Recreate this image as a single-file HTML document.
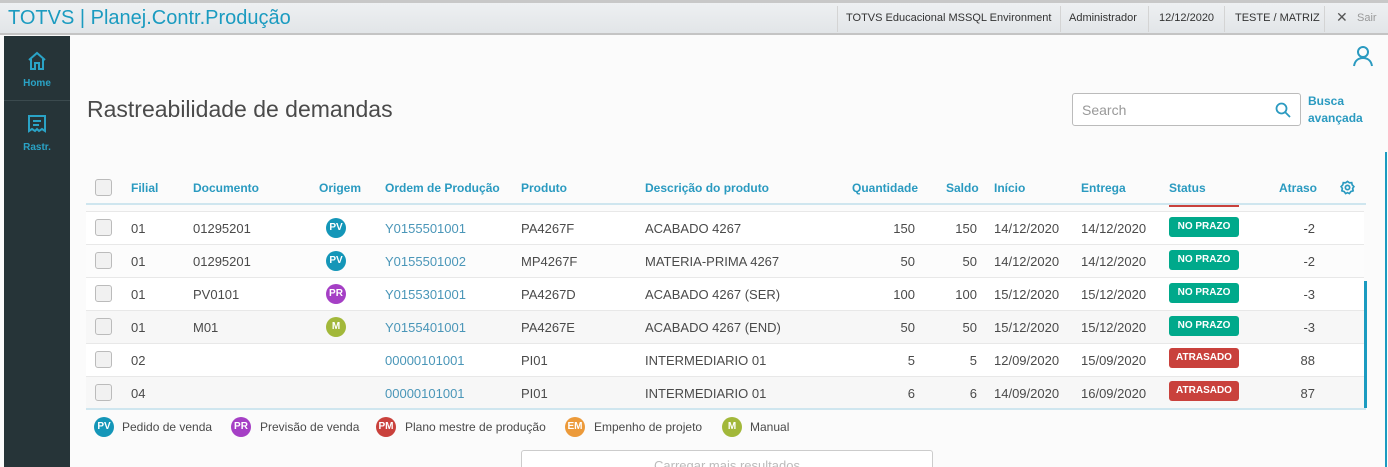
<!DOCTYPE html>
<html><head><meta charset="utf-8"><style>
*{margin:0;padding:0;box-sizing:border-box}
html{width:1388px;height:467px;overflow:hidden}
body{width:1388px;height:467px;overflow:hidden;background:#fbfbfb;font-family:"Liberation Sans",sans-serif;position:relative;color:#4a4a4a}
.top{position:absolute;left:0;top:0;width:1388px;height:35px;background:linear-gradient(#eef0f2,#e2e5e8);border-top:3px solid #c8c8c8;border-bottom:2px solid #c4c4c4}
.title{position:absolute;left:8px;top:4px;font-size:20px;color:#1b9bc0}
.tb{position:absolute;top:9px;font-size:11px;color:#333;white-space:nowrap}
.sep{position:absolute;top:3px;width:1px;height:26px;background:#d4d4d4}
.side{position:absolute;left:4px;top:36px;width:66px;height:431px;background:#263438}
.side .lbl{position:absolute;width:66px;text-align:center;font-size:10px;font-weight:bold;color:#2aa3c6}
.a{position:absolute;font-size:13px;white-space:nowrap}
.h{position:absolute;font-size:12px;color:#2a9ac0;font-weight:bold;top:181px;white-space:nowrap}
.row{position:absolute;left:86px;width:1278px;height:33px;border-top:1px solid #e8e8e8}
.cb{position:absolute;left:95px;width:17px;height:17px;border:1px solid #bbb;border-radius:3px;background:#f1f1f1}
.badge{position:absolute;left:1169px;width:70px;height:20px;border-radius:3px;color:#fff;font-size:10px;font-weight:bold;text-align:center;line-height:20px}
.dot{position:absolute;width:20px;height:20px;border-radius:50%;color:#fff;font-size:10px;font-weight:bold;text-align:center;line-height:20px}
.lnk{color:#4a96b8}
</style></head><body>
<div class="top">
<div class="title">TOTVS | Planej.Contr.Produção</div>
<div class="sep" style="left:837px"></div>
<div class="tb" style="left:846px">TOTVS Educacional MSSQL Environment</div>
<div class="sep" style="left:1060px"></div>
<div class="tb" style="left:1069px">Administrador</div>
<div class="sep" style="left:1148px"></div>
<div class="tb" style="left:1159px">12/12/2020</div>
<div class="sep" style="left:1224px"></div>
<div class="tb" style="left:1235px">TESTE / MATRIZ</div>
<div class="sep" style="left:1324px"></div>
<div class="tb" style="left:1336px;font-size:14px;top:6px;color:#555">✕</div>
<div class="tb" style="left:1357px;color:#999">Sair</div>
</div>

<div class="side">
<svg style="position:absolute;left:23px;top:15px" width="20" height="20" viewBox="0 0 20 20" fill="none" stroke="#2aa3c6" stroke-width="2"><path d="M2 9L10 2L18 9M4 8V18H8V12H12V18H16V8"/></svg>
<div class="lbl" style="top:42px">Home</div>
<div style="position:absolute;left:0;top:64px;width:66px;height:1px;background:#3b4a4e"></div>
<svg style="position:absolute;left:23px;top:78px" width="20" height="20" viewBox="0 0 20 20" fill="none" stroke="#2aa3c6" stroke-width="2"><path d="M2 2H18V17L15 15L12 17L10 15L8 17L5 15L2 17Z"/><path d="M6 7H14M6 11H12"/></svg>
<div class="lbl" style="top:106px">Rastr.</div>
</div>

<svg style="position:absolute;left:1352px;top:45px" width="22" height="22" viewBox="0 0 22 22" fill="none" stroke="#2a9ac0" stroke-width="2"><circle cx="11" cy="7" r="5"/><path d="M2 21C3 15 7 13 11 13C15 13 19 15 20 21"/></svg>

<div class="a" style="left:87px;top:96px;font-size:23px;color:#4a4a4a">Rastreabilidade de demandas</div>

<div style="position:absolute;left:1072px;top:93px;width:229px;height:33px;border:1px solid #bbb;border-radius:3px;background:#fff"></div>
<div class="a" style="left:1082px;top:102px;font-size:14px;color:#999">Search</div>
<svg style="position:absolute;left:1275px;top:102px" width="16" height="16" viewBox="0 0 16 16" fill="none" stroke="#2a9ac0" stroke-width="1.8"><circle cx="6.5" cy="6.5" r="5"/><path d="M10 10L15 15"/></svg>
<div class="a" style="left:1308px;top:93px;font-size:12px;font-weight:bold;color:#2a9ac0;line-height:17px">Busca<br>avançada</div>

<div style="position:absolute;left:1385px;top:152px;width:2px;height:315px;background:#1b9bc0"></div>

<div class="cb" style="top:179px"></div>
<div class="h" style="left:131px">Filial</div>
<div class="h" style="left:193px">Documento</div>
<div class="h" style="left:319px">Origem</div>
<div class="h" style="left:385px">Ordem de Produção</div>
<div class="h" style="left:521px">Produto</div>
<div class="h" style="left:645px">Descrição do produto</div>
<div class="h" style="left:852px">Quantidade</div>
<div class="h" style="left:946px">Saldo</div>
<div class="h" style="left:994px">Início</div>
<div class="h" style="left:1081px">Entrega</div>
<div class="h" style="left:1169px">Status</div>
<div class="h" style="left:1279px">Atraso</div>
<svg style="position:absolute;left:1340px;top:180px" width="15" height="15" viewBox="0 0 16 16" fill="none" stroke="#2a9ac0" stroke-width="1.8"><path d="M8 1.5L10 3L12.5 2.8L13 5.2L14.8 7L13.5 9L14 11.5L11.5 12.3L10 14.5L8 13.5L6 14.5L4.5 12.3L2 11.5L2.5 9L1.2 7L3 5.2L3.5 2.8L6 3Z"/><circle cx="8" cy="8" r="2.3"/></svg>
<div style="position:absolute;left:86px;top:203px;width:1280px;height:2px;background:#cfe6ef"></div>
<div style="position:absolute;left:1169px;top:205px;width:70px;height:2px;background:#c9413c"></div>

<div class="row" style="top:211px;background:#fff"></div>
<div class="row" style="top:244px;background:#fcfcfc"></div>
<div class="row" style="top:277px;background:#fff"></div>
<div class="row" style="top:310px;background:#f7f7f7"></div>
<div class="row" style="top:343px;background:#fff"></div>
<div class="row" style="top:376px;background:#f7f7f7"></div>
<div style="position:absolute;left:86px;top:408px;width:1280px;height:2px;background:#cfe6ef"></div>
<div style="position:absolute;left:1364px;top:281px;width:3px;height:127px;background:#1b9bc0"></div>

<div class="cb" style="top:219px"></div><div class="a" style="left:131px;top:221px">01</div><div class="a" style="left:193px;top:221px">01295201</div><div class="dot" style="left:326px;top:218px;background:#1496b8">PV</div><div class="a lnk" style="left:385px;top:221px">Y0155501001</div><div class="a" style="left:521px;top:221px">PA4267F</div><div class="a" style="left:645px;top:221px">ACABADO 4267</div><div class="a" style="right:473px;top:221px">150</div><div class="a" style="right:411px;top:221px">150</div><div class="a" style="left:994px;top:221px">14/12/2020</div><div class="a" style="left:1081px;top:221px">14/12/2020</div><div class="badge" style="top:217px;background:#00a98b">NO PRAZO</div><div class="a" style="right:73px;top:221px">-2</div>

<div class="cb" style="top:252px"></div><div class="a" style="left:131px;top:254px">01</div><div class="a" style="left:193px;top:254px">01295201</div><div class="dot" style="left:326px;top:251px;background:#1496b8">PV</div><div class="a lnk" style="left:385px;top:254px">Y0155501002</div><div class="a" style="left:521px;top:254px">MP4267F</div><div class="a" style="left:645px;top:254px">MATERIA-PRIMA 4267</div><div class="a" style="right:473px;top:254px">50</div><div class="a" style="right:411px;top:254px">50</div><div class="a" style="left:994px;top:254px">14/12/2020</div><div class="a" style="left:1081px;top:254px">14/12/2020</div><div class="badge" style="top:250px;background:#00a98b">NO PRAZO</div><div class="a" style="right:73px;top:254px">-2</div>

<div class="cb" style="top:285px"></div><div class="a" style="left:131px;top:287px">01</div><div class="a" style="left:193px;top:287px">PV0101</div><div class="dot" style="left:326px;top:284px;background:#a53fc5">PR</div><div class="a lnk" style="left:385px;top:287px">Y0155301001</div><div class="a" style="left:521px;top:287px">PA4267D</div><div class="a" style="left:645px;top:287px">ACABADO 4267 (SER)</div><div class="a" style="right:473px;top:287px">100</div><div class="a" style="right:411px;top:287px">100</div><div class="a" style="left:994px;top:287px">15/12/2020</div><div class="a" style="left:1081px;top:287px">15/12/2020</div><div class="badge" style="top:283px;background:#00a98b">NO PRAZO</div><div class="a" style="right:73px;top:287px">-3</div>

<div class="cb" style="top:318px"></div><div class="a" style="left:131px;top:320px">01</div><div class="a" style="left:193px;top:320px">M01</div><div class="dot" style="left:326px;top:317px;background:#a2b83a">M</div><div class="a lnk" style="left:385px;top:320px">Y0155401001</div><div class="a" style="left:521px;top:320px">PA4267E</div><div class="a" style="left:645px;top:320px">ACABADO 4267 (END)</div><div class="a" style="right:473px;top:320px">50</div><div class="a" style="right:411px;top:320px">50</div><div class="a" style="left:994px;top:320px">15/12/2020</div><div class="a" style="left:1081px;top:320px">15/12/2020</div><div class="badge" style="top:316px;background:#00a98b">NO PRAZO</div><div class="a" style="right:73px;top:320px">-3</div>

<div class="cb" style="top:351px"></div><div class="a" style="left:131px;top:353px">02</div><div class="a lnk" style="left:385px;top:353px">00000101001</div><div class="a" style="left:521px;top:353px">PI01</div><div class="a" style="left:645px;top:353px">INTERMEDIARIO 01</div><div class="a" style="right:473px;top:353px">5</div><div class="a" style="right:411px;top:353px">5</div><div class="a" style="left:994px;top:353px">12/09/2020</div><div class="a" style="left:1081px;top:353px">15/09/2020</div><div class="badge" style="top:348px;background:#c9413c">ATRASADO</div><div class="a" style="right:73px;top:353px">88</div>

<div class="cb" style="top:384px"></div><div class="a" style="left:131px;top:386px">04</div><div class="a lnk" style="left:385px;top:386px">00000101001</div><div class="a" style="left:521px;top:386px">PI01</div><div class="a" style="left:645px;top:386px">INTERMEDIARIO 01</div><div class="a" style="right:473px;top:386px">6</div><div class="a" style="right:411px;top:386px">6</div><div class="a" style="left:994px;top:386px">14/09/2020</div><div class="a" style="left:1081px;top:386px">16/09/2020</div><div class="badge" style="top:381px;background:#c9413c">ATRASADO</div><div class="a" style="right:73px;top:386px">87</div>

<div class="dot" style="left:94px;top:417px;background:#1496b8">PV</div><div class="a" style="left:122px;top:420px;font-size:12px">Pedido de venda</div>
<div class="dot" style="left:231px;top:417px;background:#a53fc5">PR</div><div class="a" style="left:260px;top:420px;font-size:12px">Previsão de venda</div>
<div class="dot" style="left:376px;top:417px;background:#c9413c">PM</div><div class="a" style="left:405px;top:420px;font-size:12px">Plano mestre de produção</div>
<div class="dot" style="left:565px;top:417px;background:#ec9a3a">EM</div><div class="a" style="left:594px;top:420px;font-size:12px">Empenho de projeto</div>
<div class="dot" style="left:722px;top:417px;background:#a2b83a">M</div><div class="a" style="left:750px;top:420px;font-size:12px">Manual</div>

<div style="position:absolute;left:521px;top:450px;width:412px;height:17px;overflow:hidden;border:1px solid #ccc;border-bottom:none;border-radius:3px 3px 0 0;background:#fff;text-align:center;font-size:13px;color:#bbb;padding-top:7px;line-height:15px">Carregar mais resultados</div>
</body></html>
